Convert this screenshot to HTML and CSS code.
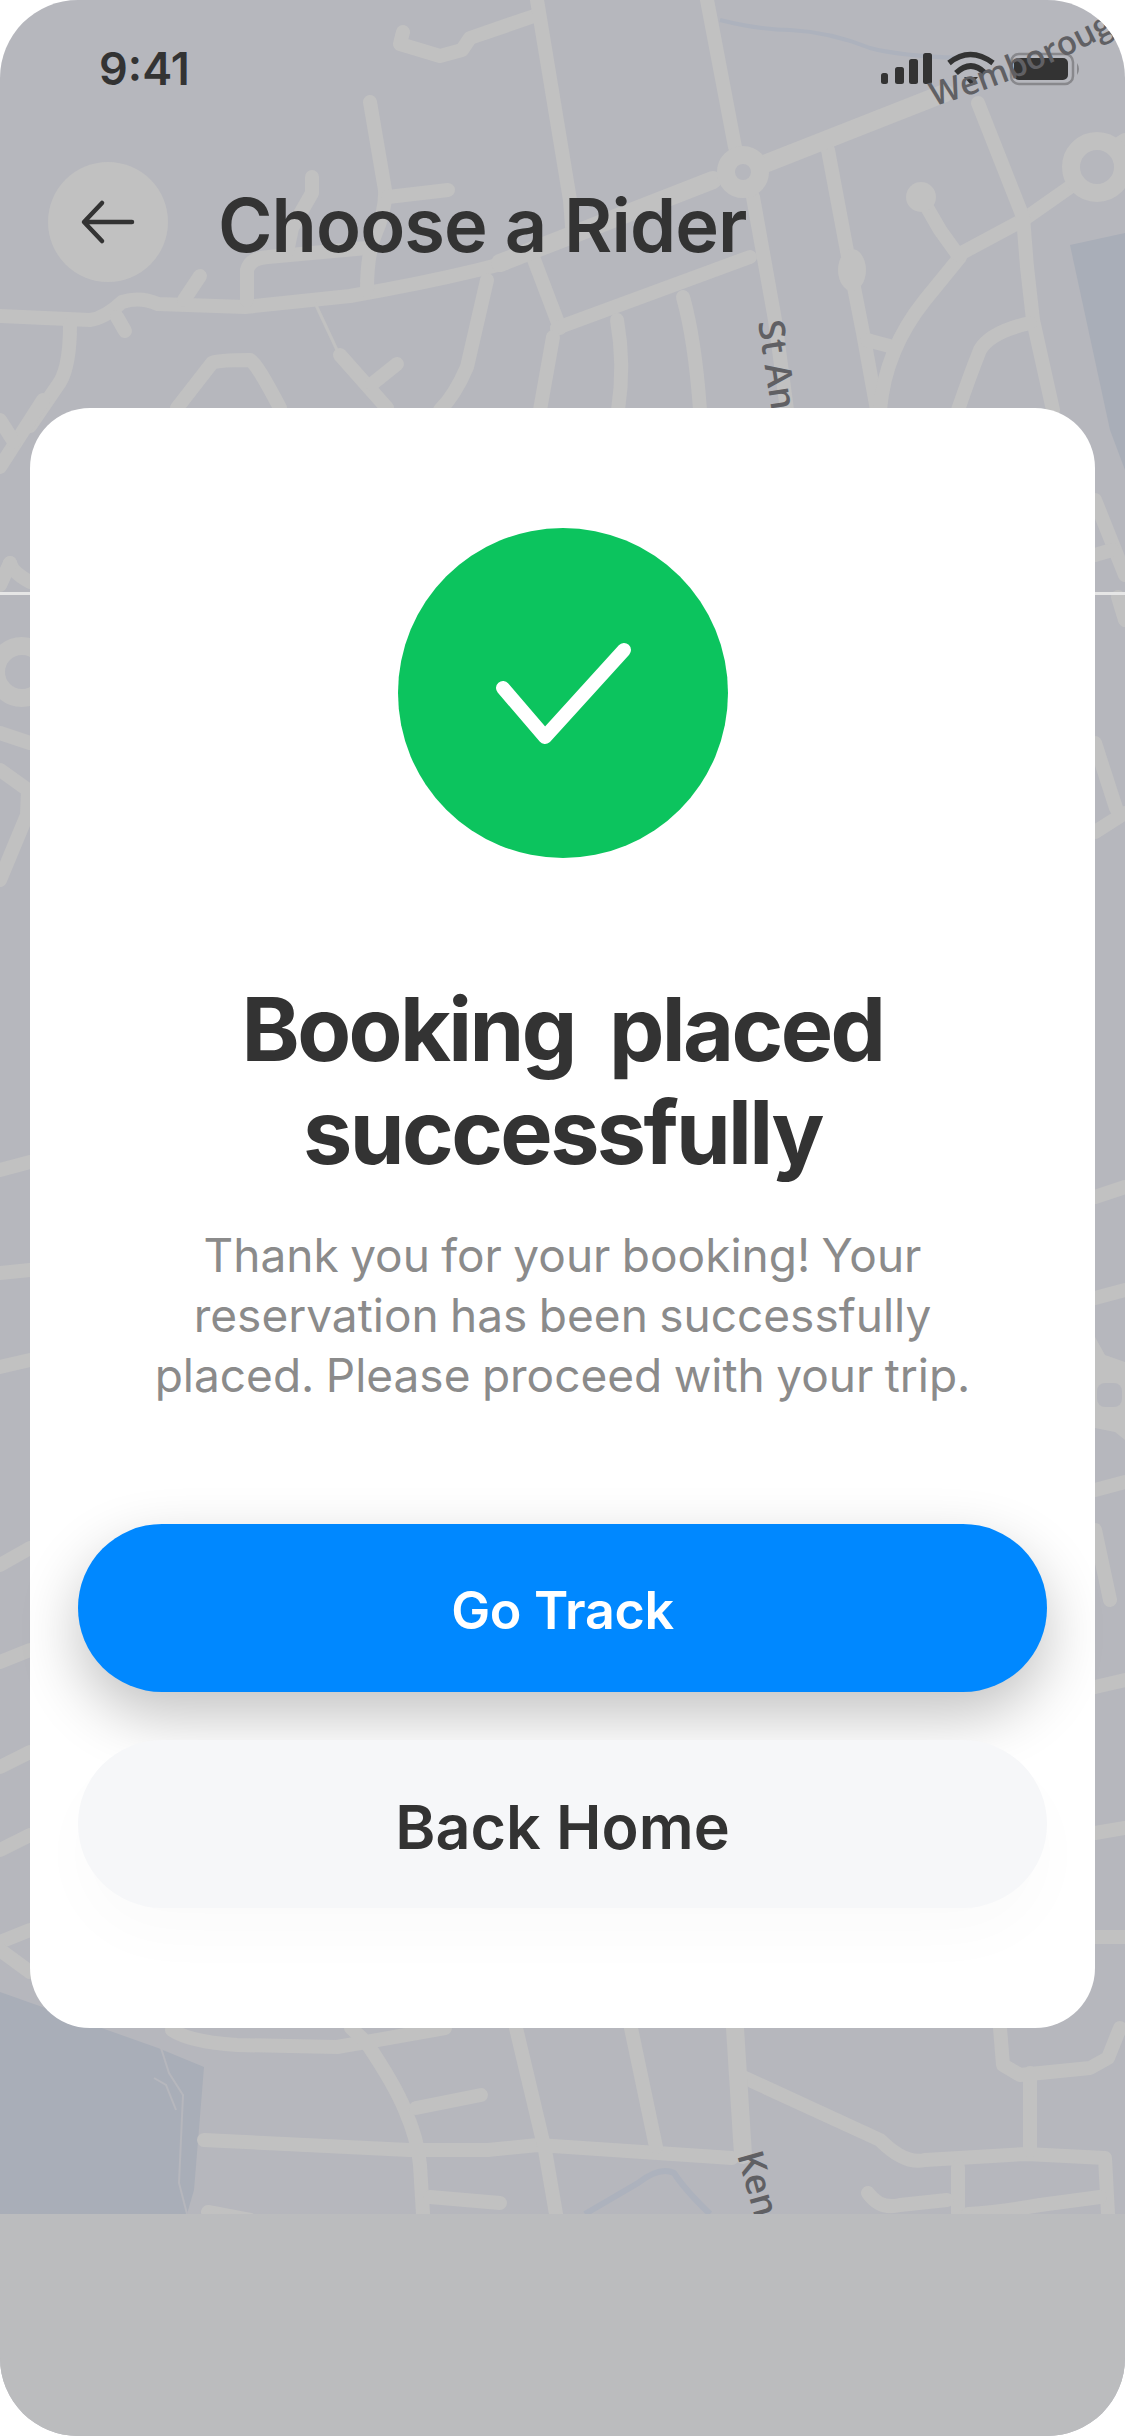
FILE: index.html
```html
<!DOCTYPE html>
<html>
<head>
<meta name="viewport" content="width=device-width, initial-scale=1">
<title>Booking placed</title>
<link rel="stylesheet" href="styles.css">
</head>
<body>

<div class="phone">

  <!-- map behind everything -->
  <svg class="map" viewBox="0 0 1125 2214" aria-hidden="true">
    <polygon class="water" points="1070,245 1125,233 1125,470 1110,430"/>
    <polygon class="water" points="0,1992 158,2048 204,2067 194,2190 187,2214 0,2214"/>
    <path class="river" d="M720 20 Q760 30 790 30 Q830 32 870 48 Q900 56 960 58"/>
    <path class="river river-w" d="M585 2214 L638 2183 Q660 2166 674 2173 Q685 2190 710 2214"/>
    <path class="inlet" d="M161 2048 L169 2073 L183 2095 L179 2183 L187 2214"/>
    <path class="inlet" d="M154 2078 L166 2085 L176 2110"/>

    <g class="road w14">
      <path d="M0 316 L90 320 Q105 318 122 302 Q140 296 158 304 L245 307 L350 296 Q420 284 478 270 L505 263"/>
      <path d="M117 317 L125 331"/>
      <path d="M70 325 Q70 365 60 382 L30 426"/>
      <path d="M200 276 L184 300"/>
      <path d="M247 300 L247 270 Q250 258 268 257 L367 248"/>
      <path d="M370 102 L385 190 Q386 210 375 235 Q367 255 367 290"/>
      <path d="M388 197 L448 190"/>
      <path d="M312 177 L312 193 L292 228 L287 252"/>
      <path d="M177 408 L212 363 Q218 360 250 360 Q256 362 280 408"/>
      <path d="M340 355 L387 408"/>
      <path d="M397 364 L372 384"/>
      <path d="M487 280 L467 367 Q455 395 440 410"/>
      <path d="M403 32 L400 44 L440 56 L462 50 L470 38 L537 15"/>
      <path d="M537 0 L570 200 L573 240"/>
      <path d="M707 0 L735 147"/>
      <path d="M753 197 L775 320 L787 410"/>
      <path d="M533 257 L560 328"/>
      <path d="M557 328 L750 257"/>
      <path d="M553 337 L540 410"/>
      <path d="M617 320 Q625 365 618 410"/>
      <path d="M683 297 Q695 340 700 410"/>
      <path d="M828 150 L850 267 L863 333 L877 410"/>
      <path d="M867 340 L893 347"/>
      <path d="M960 257 L925 300 Q885 350 880 410"/>
      <path d="M921 197 L940 230 L958 255 L1023 220 L1070 187"/>
      <path d="M978 103 L1023 217 L1027 267 L1033 320 L1053 410"/>
      <path d="M1030 323 Q990 332 980 350 Q970 375 958 410"/>
      <path d="M1117 145 L1125 140"/>
      <path d="M1095 500 L1125 575"/>
      <path d="M1095 555 L1112 550"/>
      <path d="M1118 597 L1125 620"/>
      <path d="M1095 743 L1116 808"/>
      <path d="M1125 813 L1095 832"/>
      <path d="M43 400 L0 467"/>
      <path d="M0 420 L14 442"/>
      <path d="M10 563 Q12 572 30 582"/>
      <path d="M10 563 L0 585"/>
      <path d="M0 733 L30 743"/>
      <path d="M0 770 L28 790 L27 815 L0 880"/>
      <path d="M0 1170 L30 1162"/>
      <path d="M0 1273 L30 1270"/>
      <path d="M0 1367 L30 1360"/>
      <path d="M0 1565 L30 1548"/>
      <path d="M0 1662 L30 1650"/>
      <path d="M0 1767 L30 1752"/>
      <path d="M0 1850 L30 1835"/>
      <path d="M0 1942 L30 1930"/>
      <path d="M0 1950 L30 1972"/>
      <path d="M1095 1197 L1125 1187"/>
      <path d="M1095 1298 L1125 1290"/>
      <path d="M1095 1490 L1125 1482"/>
      <path d="M1095 1530 L1110 1600"/>
      <path d="M1095 1687 L1125 1680"/>
      <path d="M1095 1833 L1125 1828"/>
      <path d="M1095 1937 L1125 1937"/>
      <path d="M172 2030 Q190 2042 237 2045 L337 2047 L366 2042 L445 2028"/>
      <path d="M351 2028 L366 2042 Q395 2085 405 2110 Q418 2140 420 2165 L423 2214"/>
      <path d="M416 2108 L481 2095"/>
      <path d="M204 2140 L409 2150 L488 2150 L538 2145 L732 2158"/>
      <path d="M516 2028 L545 2150 L556 2214"/>
      <path d="M631 2028 L656 2147"/>
      <path d="M743 2077 L880 2140 Q905 2165 925 2160 L1026 2154 L1105 2158 L1108 2214"/>
      <path d="M958 2167 L958 2214"/>
      <path d="M1000 2028 L1003 2065 L1020 2075 L1090 2068 L1108 2058 L1120 2028"/>
      <path d="M1030 2073 L1030 2150"/>
      <path d="M430 2197 L500 2203"/>
      <path d="M868 2193 Q880 2210 900 2205 L947 2200"/>
      <path d="M968 2214 Q1000 2212 1040 2205 L1100 2197"/>
      <path d="M208 2212 L250 2220"/>
    </g>
    <g class="road w18">
      <path d="M500 263 L713 180"/>
      <path d="M767 163 L945 93"/>
      <path d="M735 2028 L743 2155"/>
      <circle cx="743" cy="172" r="17"/>
      <circle cx="1097" cy="167" r="26"/>
      <circle cx="22" cy="672" r="26"/>
    </g>
    <path class="thin" d="M315 303 L337 350"/>
    <ellipse class="blob" cx="852" cy="270" rx="14" ry="21"/>
    <circle class="blob" cx="921" cy="197" r="15"/>
    <path class="road-fill" d="M1095 1337 L1105 1355 L1125 1362 L1125 1440 L1115 1432 L1095 1428 Z"/>
    <rect class="hole" x="1097" y="1383" width="25" height="24" rx="8"/>
    <rect class="seam" x="0" y="592" width="1125" height="3"/>
  </svg>

  <div class="status">
    <span class="time">9:41</span>
    <svg class="status-icons" viewBox="881 50 200 36" aria-hidden="true">
      <rect class="ink" x="881" y="73" width="7" height="11" rx="2.5"/>
      <rect class="ink" x="895" y="67" width="9" height="17" rx="2.5"/>
      <rect class="ink" x="909" y="59" width="9" height="25" rx="2.5"/>
      <rect class="ink" x="923" y="53" width="9" height="31" rx="2.5"/>
      <path class="wifi" d="M949 63 Q970 46 993 63"/>
      <path class="wifi" d="M956 73 Q971 59 985 73"/>
      <polygon class="ink" points="964,77 978,77 971,85"/>
      <rect class="bat-line" x="1011" y="54" width="62" height="30" rx="8"/>
      <rect class="ink" x="1014" y="58" width="54" height="22" rx="5"/>
      <path class="bat-cap" d="M1077 63 Q1081 69 1077 75 Z"/>
    </svg>
  </div>

  <!-- road names sit on top of the status icons in the picture -->
  <svg class="labels" viewBox="0 0 1125 2214" aria-hidden="true">
    <defs>
      <path id="wem" d="M934 106 Q1020 82 1118 30"/>
      <path id="ann" d="M758 322 L776 440"/>
      <path id="ken" d="M737 2155 L764 2250"/>
    </defs>
    <text class="label"><textPath href="#wem">Wemboroug</textPath></text>
    <text class="label label-big"><textPath href="#ann">St An</textPath></text>
    <text class="label label-big"><textPath href="#ken">Ken</textPath></text>
  </svg>

  <div class="header">
    <button type="button" class="back">
      <svg viewBox="0 0 60 50" width="60" height="50" aria-hidden="true">
        <path d="M54 25 H7 M24 6 L6 25 L24 44"/>
      </svg>
    </button>
    <h2 class="page-title">Choose a Rider</h2>
  </div>

  <div class="card">
    <div class="check">
      <svg viewBox="0 0 330 330" width="330" height="330" aria-hidden="true">
        <path d="M105 160 L147 209 L226 122"/>
      </svg>
    </div>
    <h1 class="card-title">Booking placed successfully</h1>
    <p class="card-text">Thank you for your booking! Your reservation has been successfully placed. Please proceed with your trip.</p>
    <button type="button" class="btn btn-blue">Go Track</button>
    <button type="button" class="btn btn-light">Back Home</button>
  </div>

  <div class="bottom"></div>
</div>

</body>
</html>
```

FILE: styles.css
```css
body {
    margin: 0;
    background: #fff;
    font-family: Inter, "Liberation Sans", sans-serif;
}

.phone {
    position: relative;
    width: 1125px;
    height: 2436px;
    display: flex;
    flex-direction: column;
    border-radius: 78px;
    overflow: hidden;
    background-color: #b6b7bd;
}

/* map */
.map, .labels {
    position: absolute;
    top: 0;
    left: 0;
    width: 1125px;
    height: 2214px;
}

.map { z-index: 0; }
.labels { z-index: 2; }

.water { fill: #a9aeb8; }
.river { fill: none; stroke: #adb2bd; stroke-width: 4; }
.river-w { stroke-width: 6; }
.inlet { fill: none; stroke: #b6b7bd; stroke-width: 2; }

.road { fill: none; stroke: #c1c1c1; stroke-linecap: round; stroke-linejoin: round; }
.w14 { stroke-width: 14; }
.w18 { stroke-width: 18; }
.thin { fill: none; stroke: #c1c1c1; stroke-width: 3; }
.blob, .road-fill { fill: #c1c1c1; }
.hole { fill: #b6b7bd; }
.seam { fill: #e6e6e6; }

.label {
    font-family: "Open Sans", sans-serif;
    font-size: 33px;
    font-weight: 600;
    fill: #606064;
}

.label-big { font-size: 36px; }

/* status bar */
.status {
    position: relative;
    z-index: 1;
    height: 136px;
    flex: none;
    display: flex;
    align-items: center;
    justify-content: space-between;
    padding: 0 44px 0 99px;
}

.time {
    font-size: 45px;
    font-weight: 600;
    color: #333;
}

.status-icons {
    width: 200px;
    height: 36px;
}

.ink { fill: #333; }
.wifi { fill: none; stroke: #333; stroke-width: 5.5; }
.bat-line { fill: none; stroke: #88888c; stroke-width: 2.5; }
.bat-cap { fill: #88888c; }

/* header */
.header {
    position: relative;
    z-index: 3;
    flex: none;
    height: 120px;
    margin-top: 26px;
    padding-left: 48px;
    display: flex;
    align-items: center;
    gap: 50px;
}

.back {
    width: 120px;
    height: 120px;
    flex: none;
    padding: 0;
    border: none;
    border-radius: 50%;
    background-color: #c1c1c1;
    display: flex;
    align-items: center;
    justify-content: center;
}

.back path {
    fill: none;
    stroke: #333;
    stroke-width: 4.5;
    stroke-linecap: round;
    stroke-linejoin: round;
}

.page-title {
    margin: 0;
    padding-top: 5px;
    font-size: 74px;
    font-weight: 600;
    color: #333;
    letter-spacing: -0.9px;
}

/* card */
.card {
    position: relative;
    z-index: 3;
    box-sizing: border-box;
    flex: none;
    width: 1065px;
    height: 1620px;
    margin: 126px 0 0 30px;
    padding: 120px 48px 0;
    border-radius: 60px;
    background-color: #fff;
    display: flex;
    flex-direction: column;
    align-items: center;
}

.check {
    width: 330px;
    height: 330px;
    flex: none;
    border-radius: 50%;
    background-color: #0cc45e;
}

.check path {
    fill: none;
    stroke: #fff;
    stroke-width: 14;
    stroke-linecap: round;
    stroke-linejoin: round;
}

.card-title {
    width: 760px;
    margin: 120px 0 0;
    font-size: 88px;
    line-height: 103px;
    font-weight: 700;
    letter-spacing: -2.6px;
    word-spacing: 16px;
    text-align: center;
    color: #333;
}

.card-text {
    width: 860px;
    margin: 41px 0 119px;
    font-size: 46px;
    line-height: 60px;
    font-weight: 400;
    word-spacing: -1.5px;
    text-align: center;
    color: #8b8b8b;
}

.btn {
    width: 969px;
    height: 168px;
    flex: none;
    padding: 5px 0 0;
    border: none;
    border-radius: 84px;
    font-family: inherit;
    font-weight: 600;
}

.btn-blue {
    position: relative;
    background-color: #0088ff;
    color: #fff;
    font-size: 52px;
    letter-spacing: -0.3px;
    box-shadow: 0 24px 60px rgba(0, 0, 0, .24);
}

.btn-light {
    position: relative;
    margin-top: 48px;
    background-color: #f6f7f9;
    color: #333;
    font-size: 61px;
    box-shadow: 0 30px 60px rgba(0, 0, 0, .02);
}

/* grey strip below the map */
.bottom {
    position: relative;
    z-index: 3;
    flex: none;
    height: 222px;
    margin-top: auto;
    background-color: #bbbcbe;
}
```
